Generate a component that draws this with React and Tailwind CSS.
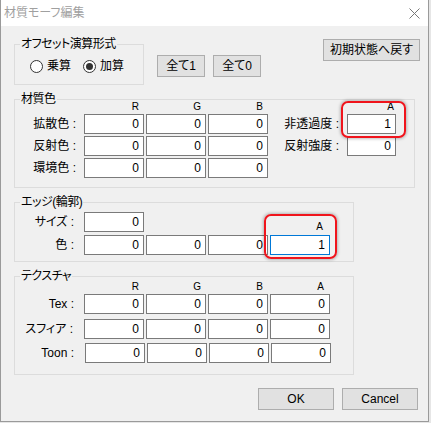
import React from "react";

const Box = ({ value = "0", active = false, w = "w-[60px]" }) => (
  <div
    className={`${w} h-[20px] bg-white border ${
      active ? "border-[#0078d7]" : "border-[#7a7a7a]"
    } text-right pr-[4px] text-[12px] leading-[18px] text-black`}
  >
    {value}
  </div>
);

const Group = ({ title, className, children }) => (
  <div className={`relative border border-[#dcdcdc] ${className}`}>
    <span className="absolute left-[5px] -top-[9px] px-[1px] bg-[#f0f0f0] text-[12px] leading-[16px] text-black whitespace-nowrap tracking-[-0.5px]">
      {title}
    </span>
    {children}
  </div>
);

const Head = ({ label, w = "w-[60px]", pr = "pr-[5px]" }) => (
  <div className={`${w} text-right ${pr} text-[10px] leading-[10px]`}>{label}</div>
);

const Radio = ({ checked, label, className }) => (
  <div className={`flex items-center ${className}`}>
    <div className="w-[13px] h-[13px] rounded-full border border-[#333] bg-white flex items-center justify-center">
      {checked && <div className="w-[7px] h-[7px] rounded-full bg-[#333]" />}
    </div>
    <span className="ml-[4px] text-[12px] leading-[16px]">{label}</span>
  </div>
);

const Btn = ({ children, className }) => (
  <div
    className={`h-[22px] bg-[#e1e1e1] border border-[#adadad] flex items-center justify-center text-[12px] text-black ${className}`}
  >
    {children}
  </div>
);

const Row = ({ label, pr = "pr-[8px]", children, className = "" }) => (
  <div className={`flex items-center h-[20px] ${className}`}>
    <div className={`w-[69px] text-right ${pr} text-[12px] leading-[16px] whitespace-nowrap`}>
      {label}
    </div>
    <div className="flex gap-[2px]">{children}</div>
  </div>
);

export default function App() {
  return (
    <div className="w-[431px] h-[423px] bg-[#e6e6e6] font-['Liberation_Sans','Noto_Sans_CJK_JP',sans-serif] [font-feature-settings:'palt'] text-black">
      <div className="relative w-[429px] h-[422px] border-x border-b border-[#9a9a9a] bg-[#f0f0f0] flex flex-col">
        {/* title bar */}
        <div className="h-[26px] bg-white flex items-center justify-between pl-[3px] pr-[8px]">
          <span className="text-[12px] text-[#a0a0a0]">材質モーフ編集</span>
          <svg width="11" height="11" viewBox="0 0 11 11" className="mt-[1px]">
            <path d="M0.5 0.5 L10.5 10.5 M10.5 0.5 L0.5 10.5" stroke="#777" strokeWidth="1" />
          </svg>
        </div>

        {/* top row */}
        <div className="flex items-start pl-[13px] pt-[13px]">
          <Group title="オフセット演算形式" className="mt-[5px] w-[130px] h-[41px]">
            <div className="flex items-center pl-[15px] pt-[13px]">
              <Radio label="乗算" className="w-[53px]" />
              <Radio label="加算" checked />
            </div>
          </Group>
          <Btn className="ml-[13px] mt-[16px] w-[48px]">全て1</Btn>
          <Btn className="ml-[8px] mt-[16px] w-[48px]">全て0</Btn>
          <Btn className="ml-[62px] w-[97px]">初期状態へ戻す</Btn>
        </div>

        {/* 材質色 */}
        <div className="pl-[13px] mt-[14px]">
          <Group title="材質色" className="w-[401px] h-[89px]">
            <div className="flex items-end h-[14px] pb-[2px] pl-[69px] gap-[2px]">
              <Head label="R" />
              <Head label="G" />
              <Head label="B" />
              <div className="w-[77px]" />
              <Head label="A" w="w-[49px]" pr="pr-[4px]" />
            </div>
            <div className="flex flex-col gap-[2px]">
              <div className="flex items-center">
                <Row label="拡散色 :">
                  <Box />
                  <Box />
                  <Box />
                </Row>
                <div className="w-[79px] text-right pr-[8px] text-[12px] leading-[16px]">非透過度 :</div>
                <Box value="1" w="w-[49px]" />
              </div>
              <div className="flex items-center">
                <Row label="反射色 :">
                  <Box />
                  <Box />
                  <Box />
                </Row>
                <div className="w-[79px] text-right pr-[8px] text-[12px] leading-[16px]">反射強度 :</div>
                <Box w="w-[49px]" />
              </div>
              <Row label="環境色 :">
                <Box />
                <Box />
                <Box />
              </Row>
            </div>
          </Group>
        </div>

        {/* エッジ */}
        <div className="pl-[13px] mt-[14px]">
          <Group title="エッジ(輪郭)" className="w-[340px] h-[60px]">
            <div className="flex items-end pt-[9px]">
              <Row label="サイズ :" pr="pr-[10px]">
                <Box />
              </Row>
              <div className="w-[124px]" />
              <div className="w-[60px] h-[20px] flex items-end justify-end pr-[5px] text-[10px] leading-[10px]">A</div>
            </div>
            <Row label="色 :" pr="pr-[10px]" className="mt-[3px]">
              <Box />
              <Box />
              <Box />
              <Box value="1" active />
            </Row>
          </Group>
        </div>

        {/* テクスチャ */}
        <div className="pl-[13px] mt-[14px]">
          <Group title="テクスチャ" className="w-[340px] h-[99px]">
            <div className="flex items-end h-[17px] pb-[2px] pl-[69px] gap-[2px]">
              <Head label="R" />
              <Head label="G" />
              <Head label="B" />
              <Head label="A" pr="pr-[6px]" />
            </div>
            <Row label="Tex :" pr="pr-[10px]">
              <Box />
              <Box />
              <Box />
              <Box />
            </Row>
            <Row label="スフィア :" pr="pr-[11px]" className="mt-[5px]">
              <Box />
              <Box />
              <Box />
              <Box />
            </Row>
            <Row label="Toon :" pr="pr-[11px]" className="mt-[4px] pl-[1px]">
              <Box />
              <Box />
              <Box />
              <Box />
            </Row>
          </Group>
        </div>

        {/* bottom buttons */}
        <div className="flex justify-end gap-[8px] pr-[10px] mt-[13px]">
          <Btn className="w-[76px] h-[21px]">OK</Btn>
          <Btn className="w-[76px] h-[21px]">Cancel</Btn>
        </div>

        {/* red highlight marks */}
        <div className="absolute left-[340px] top-[101px] w-[65px] h-[37px] rounded-[7px] border-2 border-[#f0141c] shadow-[0_0_3px_1px_rgba(0,0,0,0.25)]" />
        <div className="absolute left-[263px] top-[214px] w-[73px] h-[45px] rounded-[7px] border-2 border-[#f0141c] shadow-[0_0_3px_1px_rgba(0,0,0,0.25)]" />
      </div>
    </div>
  );
}
